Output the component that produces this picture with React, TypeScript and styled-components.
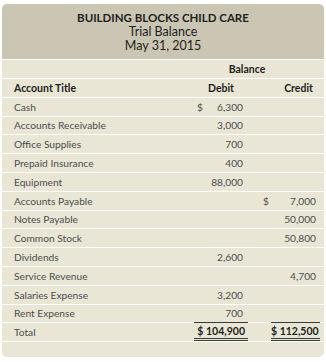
import React from 'react';
import styled, { createGlobalStyle } from 'styled-components';

type Line = {
  title: string;
  debit?: string;
  credit?: string;
  debitDollar?: boolean;
  creditDollar?: boolean;
};

const lines: Line[] = [
  { title: 'Cash', debit: '6,300', debitDollar: true },
  { title: 'Accounts Receivable', debit: '3,000' },
  { title: 'Office Supplies', debit: '700' },
  { title: 'Prepaid Insurance', debit: '400' },
  { title: 'Equipment', debit: '88,000' },
  { title: 'Accounts Payable', credit: '7,000', creditDollar: true },
  { title: 'Notes Payable', credit: '50,000' },
  { title: 'Common Stock', credit: '50,800' },
  { title: 'Dividends', debit: '2,600' },
  { title: 'Service Revenue', credit: '4,700' },
  { title: 'Salaries Expense', debit: '3,200' },
  { title: 'Rent Expense', debit: '700' }
];

const App: React.FC = () => {
  return (
    <>
      <GlobalStyle />
      <Page>
        <Card>
          <Heading>
            <Company>BUILDING BLOCKS CHILD CARE</Company>
            <SubTitle>Trial Balance</SubTitle>
            <SubTitle>May 31, 2015</SubTitle>
          </Heading>
          <BalanceRow>
            <BalanceLabel>Balance</BalanceLabel>
          </BalanceRow>
          <Row>
            <HeadCell>Account Title</HeadCell>
            <HeadCell $align="center">Debit</HeadCell>
            <HeadCell $align="right" $padRight={5}>
              Credit
            </HeadCell>
          </Row>
          {lines.map(line => (
            <Row key={line.title}>
              <TitleCell>{line.title}</TitleCell>
              <AmountCell $padLeft={3} $padRight={5}>
                {line.debitDollar && <span>$</span>}
                <Num>{line.debit}</Num>
              </AmountCell>
              <AmountCell $padLeft={1} $padRight={2}>
                {line.creditDollar && <span>$</span>}
                <Num>{line.credit}</Num>
              </AmountCell>
            </Row>
          ))}
          <Row>
            <TitleCell>Total</TitleCell>
            <TotalCell>
              <TotalBox $indent={0} $padRight={3}>$ 104,900</TotalBox>
            </TotalCell>
            <TotalCell>
              <TotalBox $indent={9} $padRight={1}>$ 112,500</TotalBox>
            </TotalCell>
          </Row>
          <Foot />
        </Card>
      </Page>
    </>
  );
};

const GlobalStyle = createGlobalStyle`
  html, body {
    margin: 0;
    padding: 0;
    background: #ffffff;
  }
  body {
    font-family: Lato, 'Liberation Sans', Arial, sans-serif;
  }
`;

const Page = styled.div`
  padding: 4px 2px 0 2px;
  width: 322px;
`;

const Card = styled.div`
  background: #e9e6d6;
  border-radius: 5px;
  overflow: hidden;
`;

const Heading = styled.div`
  height: 56px;
  background: #cbc6b3;
  display: flex;
  flex-direction: column;
  align-items: center;
  padding-top: 7px;
  box-sizing: border-box;
  border-bottom: 1px solid #ffffff;
`;

const Company = styled.div`
  font-size: 11.5px;
  font-weight: bold;
  color: #231f20;
  line-height: 14px;
`;

const SubTitle = styled.div`
  font-size: 12.5px;
  color: #231f20;
  line-height: 13.5px;
`;

const BalanceRow = styled.div`
  display: grid;
  grid-template-columns: 1fr 124px;
  padding: 0 6px 0 12px;
  height: 18px;
  align-items: center;
  border-bottom: 1px solid #ffffff;
  &::before {
    content: '';
  }
`;

const BalanceLabel = styled.div`
  font-size: 10.5px;
  font-weight: bold;
  color: #231f20;
  text-align: center;
  padding-right: 18px;
`;

const Row = styled.div`
  display: grid;
  grid-template-columns: 1fr 54px 56px;
  column-gap: 14px;
  padding: 0 6px 0 12px;
  height: 17.8px;
  align-items: center;
  border-bottom: 1px solid #ffffff;
  font-size: 10.2px;
`;

const HeadCell = styled.div<{ $align?: 'left' | 'center' | 'right'; $padRight?: number }>`
  font-weight: bold;
  font-size: 10.5px;
  color: #231f20;
  text-align: ${props => props.$align || 'left'};
  padding-right: ${props => props.$padRight || 0}px;
`;

const TitleCell = styled.div`
  color: #4d4d4d;
  white-space: nowrap;
`;

const AmountCell = styled.div<{ $padLeft: number; $padRight: number }>`
  display: flex;
  justify-content: space-between;
  color: #4d4d4d;
  padding: 0 ${props => props.$padRight}px 0 ${props => props.$padLeft}px;
`;

const Num = styled.span`
  margin-left: auto;
`;

const TotalCell = styled.div`
  height: 100%;
  display: flex;
`;

const TotalBox = styled.div<{ $indent: number; $padRight: number }>`
  flex: 1;
  margin-left: ${props => props.$indent}px;
  margin-top: -1px;
  border-top: 1px solid #3a3a3a;
  border-bottom: 3px double #3a3a3a;
  display: flex;
  align-items: center;
  justify-content: flex-end;
  padding-right: ${props => props.$padRight}px;
  font-weight: bold;
  font-size: 10.5px;
  white-space: nowrap;
  color: #231f20;
  box-sizing: border-box;
  height: calc(100% + 1px);
`;

const Foot = styled.div`
  height: 15px;
`;

export default App;
